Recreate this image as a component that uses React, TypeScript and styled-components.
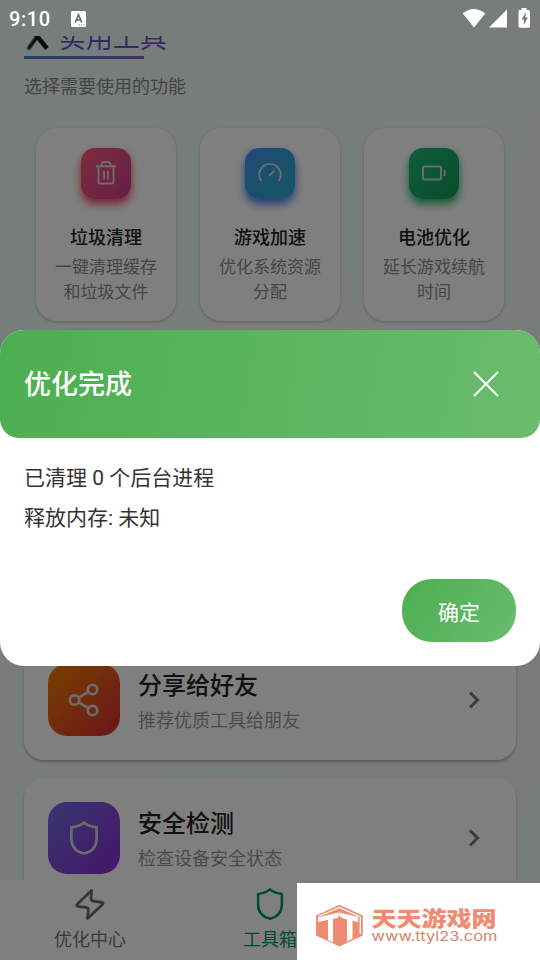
import React from "react";
import styled, { createGlobalStyle } from "styled-components";

const GlobalStyle = createGlobalStyle`
  * { box-sizing: border-box; }
  html, body { margin: 0; padding: 0; }
  body { font-family: Roboto, "Noto Sans CJK SC", sans-serif; overflow: hidden; }
  h1, h2, h3, p { margin: 0; }
  svg { display: block; flex: none; }
`;

const Screen = styled.div`
  position: relative;
  width: 540px;
  height: 960px;
  overflow: hidden;
  display: flex;
  flex-direction: column;
  background: linear-gradient(135deg, #eefaf5 0%, #f0faf6 50%, #edf8f4 100%);
`;

const StatusBar = styled.header`
  position: relative;
  z-index: 3;
  height: 36px;
  flex: none;
  display: flex;
  align-items: center;
  padding: 1px 9px 0;
  color: #fff;
`;
const Clock = styled.span`
  font-size: 20px;
  font-weight: 500;
  letter-spacing: 0.6px;
  width: 62px;
`;
const StatusIcons = styled.div`
  margin-left: auto;
  display: flex;
  align-items: center;
`;

const Content = styled.main`
  flex: 1;
  min-height: 0;
  overflow: hidden;
  padding: 0 24px;
  display: flex;
  flex-direction: column;
`;
const Heading = styled.div`
  flex: none;
  height: 23px;
  width: 120px;
  display: flex;
  align-items: flex-end;
  padding-bottom: 5px;
  border-bottom: 3px solid;
  border-image: linear-gradient(90deg, #4286cc, #8b5cc0) 1;
  white-space: nowrap;
`;
const PageTitle = styled.h1`
  font-size: 27px;
  line-height: 27px;
  font-weight: 400;
  margin: 0 0 -2px 9px;
  background: linear-gradient(90deg, #5a50d8, #7d50cc);
  -webkit-background-clip: text;
  color: transparent;
`;
const Subtitle = styled.p`
  flex: none;
  margin-top: 14px;
  font-size: 18px;
  line-height: 27px;
  color: #858a88;
`;

const ToolGrid = styled.section`
  flex: none;
  display: grid;
  grid-template-columns: repeat(3, 140px);
  gap: 24px;
  padding: 28px 12px 0;
`;
const ToolCard = styled.article`
  height: 193px;
  border-radius: 21px;
  background: #fff;
  box-shadow: 0 1px 3px rgba(0, 0, 0, 0.22);
  display: flex;
  flex-direction: column;
  align-items: center;
  padding-top: 20px;
  text-align: center;
`;
const ToolIcon = styled.div<{ $from: string; $to: string; $glow: string }>`
  width: 50px;
  height: 51px;
  border-radius: 14px;
  background: linear-gradient(135deg, ${(p) => p.$from}, ${(p) => p.$to});
  box-shadow: 0 5px 8px ${(p) => p.$glow};
  display: flex;
  align-items: flex-start;
  justify-content: center;
  padding-top: 12px;
  color: #d8d8d8;
`;
const ToolName = styled.h3`
  margin-top: 26px;
  font-size: 18px;
  line-height: 26px;
  font-weight: 500;
  color: #222;
`;
const ToolText = styled.p`
  width: 104px;
  margin-top: 4px;
  font-size: 17px;
  line-height: 25px;
  color: #8c8c8c;
`;

const List = styled.section`
  flex: none;
  margin-top: 319px;
  display: flex;
  flex-direction: column;
  gap: 18px;
`;
const ListCard = styled.article`
  height: 120px;
  border-radius: 20px;
  background: #fff;
  box-shadow: 0 2px 3px rgba(0, 0, 0, 0.26);
  display: flex;
  align-items: center;
  padding: 0 36px 0 24px;
`;
const ListIcon = styled.div<{ $from: string; $to: string }>`
  width: 72px;
  height: 72px;
  border-radius: 19px;
  background: linear-gradient(135deg, ${(p) => p.$from}, ${(p) => p.$to});
  display: flex;
  align-items: center;
  justify-content: center;
  color: #d8d8d8;
`;
const ListBody = styled.div`
  flex: 1;
  padding: 2px 0 0 18px;
`;
const ListTitle = styled.h3`
  font-size: 24px;
  line-height: 36px;
  font-weight: 500;
  color: #222;
`;
const ListText = styled.p`
  margin-top: 3px;
  font-size: 18px;
  line-height: 27px;
  color: #999;
`;

const TabBar = styled.nav`
  flex: none;
  height: 80px;
  background: #fff;
  display: grid;
  grid-template-columns: repeat(3, 1fr);
`;
const Tab = styled.div<{ $active?: boolean }>`
  display: flex;
  flex-direction: column;
  align-items: center;
  padding-top: 7px;
  font-size: 18px;
  line-height: 27px;
  color: ${(p) => (p.$active ? "#009866" : "#777")};
  svg { margin-bottom: 5px; color: ${(p) => (p.$active ? "#009866" : "#666c70")}; }
`;

const Backdrop = styled.div`
  position: absolute;
  inset: 0;
  z-index: 2;
  background: rgba(0, 0, 0, 0.5);
`;
const Dialog = styled.section`
  position: absolute;
  z-index: 4;
  top: 330px;
  left: 0;
  width: 540px;
  height: 336px;
  border-radius: 24px;
  background: #fff;
  overflow: hidden;
  display: flex;
  flex-direction: column;
`;
const DialogHeader = styled.div`
  height: 108px;
  flex: none;
  border-radius: 0 0 19px 19px;
  background: linear-gradient(100deg, #4caf50, #6abc6d);
  display: flex;
  align-items: center;
  justify-content: space-between;
  padding: 0 41px 0 24px;
`;
const DialogTitle = styled.h2`
  padding-top: 2px;
  font-size: 27px;
  line-height: 40px;
  font-weight: 500;
  color: #fff;
`;
const DialogBody = styled.div`
  flex: 1;
  padding: 20px 24px 0;
  font-size: 21px;
  line-height: 40px;
  color: #333;
`;
const DialogFooter = styled.div`
  display: flex;
  justify-content: flex-end;
  padding: 0 24px 24px;
`;
const ConfirmButton = styled.button`
  width: 114px;
  height: 63px;
  border: 0;
  border-radius: 30px;
  background: linear-gradient(125deg, #4caf50, #6abc6d);
  color: #fff;
  font: inherit;
  font-size: 21px;
  padding: 0;
`;

const Watermark = styled.aside`
  position: absolute;
  z-index: 5;
  left: 297px;
  top: 883px;
  width: 243px;
  height: 77px;
  background: #fff;
`;

const ShieldIcon = ({ size, width = 2 }: { size: number; width?: number }) => (
  <svg width={size} height={size} viewBox="0 0 36 36" fill="none" stroke="currentColor" strokeWidth={width} strokeLinejoin="round">
    <path d="M18 2.500c3.300 2.900 7.500 4.300 12.600 4.900v11.300c0 7.500-4.800 13.300-12.600 14.800C10.200 32 5.400 26.200 5.400 18.700V7.400C10.500 6.800 14.700 5.400 18 2.500Z" />
  </svg>
);
const Chevron = () => (
  <svg width="12" height="18" viewBox="0 0 12 18" fill="none" stroke="#777" strokeWidth="3">
    <path d="M2 1.500 9.500 9 2 16.500" />
  </svg>
);

const tools = [
  {
    name: "垃圾清理", text: "一键清理缓存和垃圾文件", from: "#fb5c74", to: "#c83c92", glow: "#f04858",
    icon: (
      <svg width="22" height="26" viewBox="0 0 22 26" fill="none" stroke="currentColor" strokeWidth="1.900">
        <path d="M1 6.200h20M6.500 6V4l1.500-2h6l1.500 2v2M3.500 6.500v15.200q0 1.800 1.800 1.800h11.400q1.800 0 1.800-1.800V6.500M9 11v8.500M13 11v8.500" />
      </svg>
    ),
  },
  {
    name: "游戏加速", text: "优化系统资源分配", from: "#4494f0", to: "#28acc6", glow: "#4a78f4",
    icon: (
      <svg width="26" height="26" viewBox="0 0 26 26" fill="none" stroke="currentColor" strokeWidth="1.900" strokeLinecap="round">
        <path d="M3.800 20.300A10.800 10.800 0 1 1 22.200 20.300M12.500 15.500 17 11" />
      </svg>
    ),
  },
  {
    name: "电池优化", text: "延长游戏续航时间", from: "#1ebc78", to: "#149858", glow: "#23b866",
    icon: (
      <svg width="26" height="26" viewBox="0 0 26 26" fill="none" stroke="currentColor" strokeWidth="1.900">
        <rect x="2" y="6.500" width="18" height="13" rx="1.200" />
        <path d="M23.700 10v6" />
      </svg>
    ),
  },
];

export default function App() {
  return (
    <>
      <GlobalStyle />
      <Screen>
        <StatusBar>
          <Clock>9:10</Clock>
          <svg width="15" height="16" viewBox="0 0 15 16">
            <rect width="15" height="16" rx="1.500" fill="#fff" />
            <path d="M4.200 11.500 7.500 3.700l3.300 7.800M5.300 9h4.400" fill="none" stroke="#666" strokeWidth="1.600" />
            <path d="M8 14h1M10.200 14h1M12.400 14h1" stroke="#666" />
          </svg>
          <StatusIcons>
            <svg width="68" height="22" viewBox="463 7 68 22" fill="#fff">
              <path d="M462.700 12.500Q474 3.500 485.300 12.500L474 26.500Z" />
              <path d="M489 26.500h18V8.500Z" />
              <path fillRule="evenodd" d="M519 9h2.500V7h5v2h2q1.500 0 1.500 1.500v14.800q0 1.500-1.500 1.500h-8.500q-1.500 0-1.500-1.500V10.500Q518.500 9 519 9ZM526 11.500l-4.500 7h2.300v5.500l4-7.500h-2.300Z" />
            </svg>
          </StatusIcons>
        </StatusBar>
        <Content>
          <Heading>
            <svg width="26" height="15" viewBox="0 0 26 15">
              <path d="m14-1-9 13" stroke="#777" strokeWidth="4.500" strokeLinecap="round" />
              <path d="m14 0-9 12" stroke="#222" strokeWidth="2.500" />
              <path d="m12-1 11 13.500" stroke="#161616" strokeWidth="4.500" />
            </svg>
            <PageTitle>实用工具</PageTitle>
          </Heading>
          <Subtitle>选择需要使用的功能</Subtitle>
          <ToolGrid>
            {tools.map((t) => (
              <ToolCard key={t.name}>
                <ToolIcon $from={t.from} $to={t.to} $glow={t.glow}>{t.icon}</ToolIcon>
                <ToolName>{t.name}</ToolName>
                <ToolText>{t.text}</ToolText>
              </ToolCard>
            ))}
          </ToolGrid>
          <List>
            <ListCard>
              <ListIcon $from="#f08000" $to="#d82a34">
                <svg width="32" height="34" viewBox="0 0 32 34" fill="none" stroke="currentColor" strokeWidth="2.700">
                  <circle cx="6.500" cy="17" r="4.700" />
                  <circle cx="24.500" cy="6.500" r="4.700" />
                  <circle cx="24.500" cy="27.500" r="4.700" />
                  <path d="m10.600 14.600 9.800-5.700M10.600 19.400l9.800 5.700" />
                </svg>
              </ListIcon>
              <ListBody>
                <ListTitle>分享给好友</ListTitle>
                <ListText>推荐优质工具给朋友</ListText>
              </ListBody>
              <Chevron />
            </ListCard>
            <ListCard>
              <ListIcon $from="#706ce0" $to="#8a2cd0"><ShieldIcon size={36} width={2.7} /></ListIcon>
              <ListBody>
                <ListTitle>安全检测</ListTitle>
                <ListText>检查设备安全状态</ListText>
              </ListBody>
              <Chevron />
            </ListCard>
          </List>
        </Content>
        <TabBar>
          <Tab>
            <svg width="34" height="34" viewBox="0 0 34 34" fill="none" stroke="currentColor" strokeWidth="2.800" strokeLinejoin="round">
              <path d="M18.500 3.500 4.200 17.200Q3 19 5 19.300L13.500 20.500Q15.500 21 15.300 23L14.500 31.500 29.500 17.500Q31 15.700 28.800 15.300L20 14Q18 13.600 18 11.500Z" />
            </svg>
            优化中心
          </Tab>
          <Tab $active><ShieldIcon size={34} width={2.7} />工具箱</Tab>
        </TabBar>
        <Backdrop />
        <Dialog>
          <DialogHeader>
            <DialogTitle>优化完成</DialogTitle>
            <svg width="26" height="26" viewBox="0 0 26 26" stroke="#fff" strokeWidth="2">
              <path d="m1 1 24 24M25 1 1 25" />
            </svg>
          </DialogHeader>
          <DialogBody>
            <p>已清理 0 个后台进程</p>
            <p>释放内存: 未知</p>
          </DialogBody>
          <DialogFooter><ConfirmButton>确定</ConfirmButton></DialogFooter>
        </Dialog>
        <Watermark>
          <svg width="243" height="77" viewBox="297 883 243 77" fill="#ef8b70">
            <path d="M339.300 904.700 362.800 915.500v20l-23.500 11-23.300-11v-20Z" />
            <path fill="none" stroke="#fff" strokeWidth="1.300" d="m318.500 916.500 20.800-9 21 9.500v17" />
            <path fill="#fff" d="m318 917.500 20.500-5v5l-5.500 1.500v23.500l-5-2.500v-20l-10 2ZM339 912.500l19 4.500v5l-5.500-1.300v18l-5.500 2.800v-22l-4-1-4-3Z" />
            <text transform="translate(371.500 925.500) scale(1 .84)" fontFamily="Noto Sans CJK SC" fontWeight="900" fontSize="25">天天游戏网</text>
            <text x="371.500" y="941" fill="#d5836c" fontFamily="Inter, sans-serif" fontSize="13.500" textLength="126" lengthAdjust="spacingAndGlyphs">www.ttyl23.com</text>
          </svg>
        </Watermark>
      </Screen>
    </>
  );
}
